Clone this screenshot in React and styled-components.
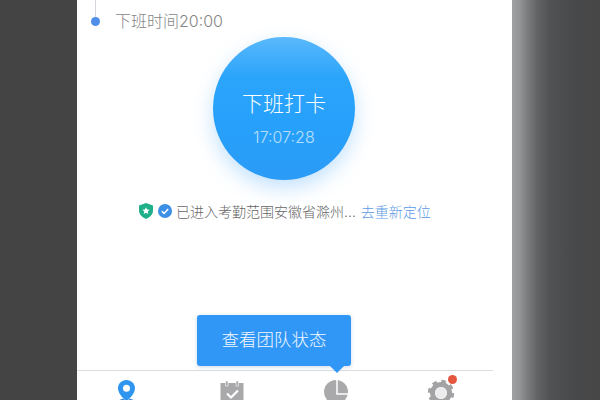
import styled, { createGlobalStyle } from "styled-components";

const FONT = 'Inter, "Noto Sans CJK SC", "Noto Sans", sans-serif';

const GlobalStyle = createGlobalStyle`
  html, body {
    margin: 0;
    padding: 0;
    background: #444;
  }
`;

const Page = styled.div`
  display: flex;
  width: 600px;
  height: 400px;
  overflow: hidden;
  font-family: ${FONT};
`;

const LeftShade = styled.div`
  width: 77px;
  background: #444;
`;

const RightShade = styled.div`
  flex: 1;
  background: linear-gradient(90deg, #a0a1a1 0, #929394 8px, #7a7b7c 16px, #626466 25px, #505254 38px, #48494a 60px, #474747 100%);
`;

const Screen = styled.div`
  width: 435px;
  padding-right: 19px;
  box-sizing: border-box;
  background: #fff;
`;

const Content = styled.div`
  display: flex;
  flex-direction: column;
  height: 400px;
`;

const Timeline = styled.div`
  display: flex;
  align-items: center;
  height: 37px;
  padding: 5px 0 0 14px;
  box-sizing: border-box;
`;

const Dot = styled.span`
  position: relative;
  width: 9px;
  height: 9px;
  border-radius: 50%;
  background: #4f8fea;

  &::before {
    content: "";
    position: absolute;
    left: 4px;
    bottom: 9px;
    width: 1px;
    height: 20px;
    background: #d4d8de;
  }
`;

const TimelineText = styled.span`
  margin-left: 15px;
  font-size: 16px;
  font-weight: 300;
  line-height: 20px;
  color: #858585;
`;

const PunchButton = styled.div`
  align-self: center;
  display: flex;
  flex-direction: column;
  align-items: center;
  width: 142px;
  height: 143px;
  margin-left: -2px;
  padding-top: 52px;
  box-sizing: border-box;
  border-radius: 50%;
  color: #fff;
  background: linear-gradient(180deg, #5ab8fb 0, #2ba4fb 28%, #26a1fb 60%, #2b9bf6 100%);
  box-shadow: 0 8px 20px rgba(60, 160, 250, 0.3);
`;

const PunchTitle = styled.span`
  font-size: 21px;
  font-weight: 300;
  line-height: 30px;
`;

const PunchTime = styled.span`
  margin-top: 8px;
  font-size: 16px;
  font-weight: 300;
  line-height: 20px;
  color: rgba(255, 255, 255, 0.68);
`;

const Status = styled.div`
  display: flex;
  align-items: center;
  height: 24px;
  margin-top: 19px;
  padding-left: 62px;
  font-size: 14px;
  font-weight: 300;
  color: #666;
`;

const StatusIcon = styled.svg`
  flex: none;
  width: 14px;
  height: 16px;
  margin-right: ${({ $gap }) => $gap}px;
`;

const RelocateLink = styled.span`
  margin-left: 5px;
  color: #5b9ae6;
`;

const Spacer = styled.div`
  flex: 1;
`;

const TeamPopover = styled.div`
  position: relative;
  align-self: flex-start;
  width: 154px;
  height: 51px;
  margin: 0 0 4px 120px;
  border-radius: 3px;
  background: #3197f6;
  box-shadow: 0 1px 4px rgba(50, 100, 160, 0.25);
  color: #f2f8ff;
  font-size: 17.5px;
  font-weight: 300;
  line-height: 49px;
  text-align: center;

  &::after {
    content: "";
    position: absolute;
    left: 133px;
    bottom: -7px;
    border-left: 7px solid transparent;
    border-right: 7px solid transparent;
    border-top: 7px solid #3197f6;
  }
`;

const TabBar = styled.nav`
  display: grid;
  grid-template-columns: repeat(4, 1fr);
  height: 29px;
  border-top: 1px solid #dcdcdc;
`;

const Tab = styled.div`
  position: relative;
  display: flex;
  justify-content: center;
  padding-top: ${({ $top }) => $top}px;
  transform: translateX(${({ $shift }) => $shift || 0}px);
`;

const TabIcon = styled.svg`
  width: 26px;
  height: 26px;
  flex: none;
`;

const Badge = styled.span`
  position: absolute;
  top: 4px;
  left: 59px;
  width: 9px;
  height: 9px;
  border-radius: 50%;
  background: #e5563f;
`;

export default function App() {
  return (
    <>
      <GlobalStyle />
      <Page>
        <LeftShade />
        <Screen>
          <Content>
            <Timeline>
              <Dot />
              <TimelineText>下班时间20:00</TimelineText>
            </Timeline>
            <PunchButton>
              <PunchTitle>下班打卡</PunchTitle>
              <PunchTime>17:07:28</PunchTime>
            </PunchButton>
            <Status>
              <StatusIcon $gap={5} viewBox="0 0 14 16">
                <path d="M7 0l7 2.400v5.200c0 4-3 6.800-7 8.400-4-1.600-7-4.400-7-8.400V2.400z" fill="#1fb08a" />
                <path d="M7 4.200l1.100 2.300 2.500.3-1.800 1.700.5 2.500L7 9.800l-2.300 1.200.5-2.500-1.800-1.700 2.500-.3z" fill="#fff" />
              </StatusIcon>
              <StatusIcon $gap={4} viewBox="0 0 14 16">
                <circle cx="7" cy="8" r="7" fill="#3d8fe6" />
                <path d="M3.800 8.200l2.300 2.200 4.100-4.300" fill="none" stroke="#fff" strokeWidth="1.500" />
              </StatusIcon>
              已进入考勤范围安徽省滁州...
              <RelocateLink>去重新定位</RelocateLink>
            </Status>
            <Spacer />
            <TeamPopover>查看团队状态</TeamPopover>
            <TabBar>
              <Tab $top={9} $shift={-3}>
                <TabIcon viewBox="0 0 26 26">
                  <ellipse cx="13.500" cy="22" rx="8.500" ry="3.500" fill="#2f7fd8" />
                  <path fillRule="evenodd" d="M13.500 0c4.900 0 8.500 3.600 8.500 8.300 0 4.700-4.200 9.300-8.500 13.200C9.200 17.600 5 13 5 8.300 5 3.600 8.600 0 13.500 0zm0 4.800a3.500 3.500 0 100 7 3.500 3.500 0 000-7z" fill="#2f95ee" stroke="#fff" strokeWidth="1" paintOrder="stroke" />
                </TabIcon>
              </Tab>
              <Tab $top={10} $shift={-1}>
                <TabIcon viewBox="0 0 26 26">
                  <path d="M1.500 2h23v24h-23z" fill="#a9a9ab" />
                  <path d="M6.500 0H9v5H6.500zM17 0h2.500v5H17z" fill="#a9a9ab" stroke="#fff" strokeWidth=".6" />
                  <path d="M8 12.500l4 4 7-7" fill="none" stroke="#fff" strokeWidth="2.200" />
                </TabIcon>
              </Tab>
              <Tab $top={8}>
                <TabIcon viewBox="0 0 26 26">
                  <circle cx="12" cy="13" r="12" fill="#a9a9ab" />
                  <path d="M13 0v15h13" fill="none" stroke="#fff" strokeWidth="1.500" />
                </TabIcon>
              </Tab>
              <Tab $top={8}>
                <TabIcon viewBox="0 0 26 26">
                  <circle cx="13" cy="14" r="8.500" fill="none" stroke="#a3a3a5" strokeWidth="5" />
                  <circle cx="13" cy="14" r="11.500" fill="none" stroke="#a3a3a5" strokeWidth="3.500" strokeDasharray="4.500 4.530" />
                  <circle cx="13" cy="14" r="6" fill="#ececed" />
                </TabIcon>
                <Badge />
              </Tab>
            </TabBar>
          </Content>
        </Screen>
        <RightShade />
      </Page>
    </>
  );
}
